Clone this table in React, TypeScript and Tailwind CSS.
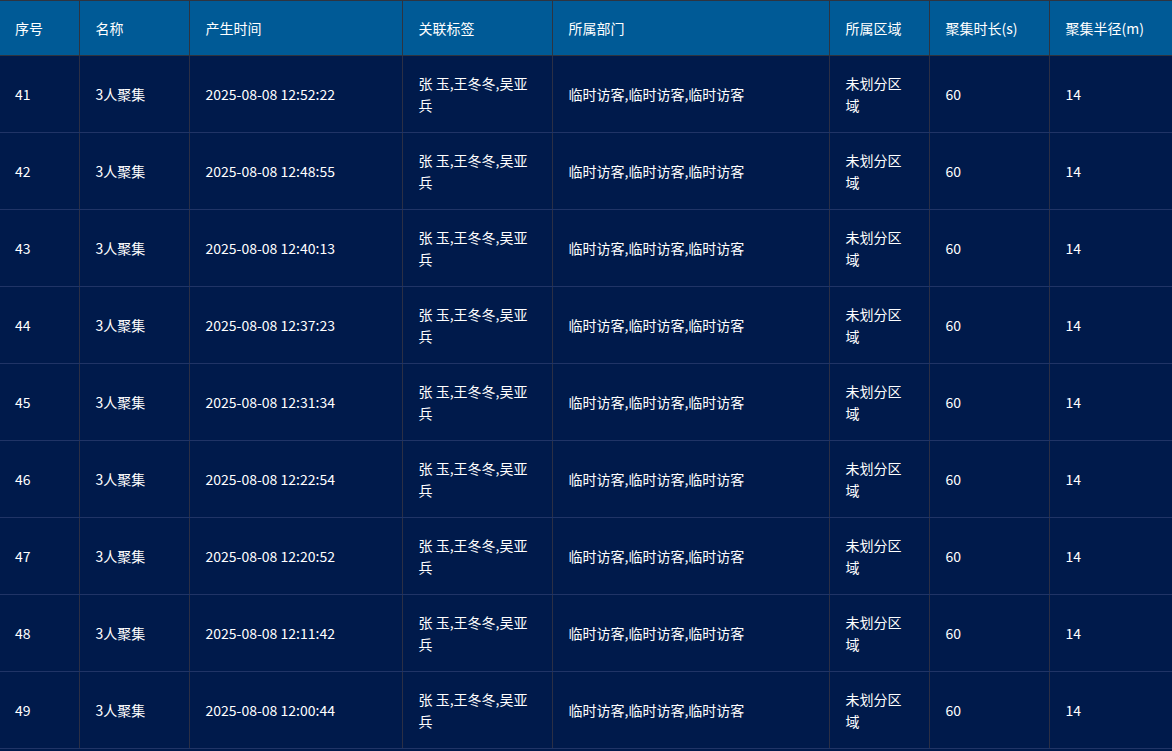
// Gathering events table — static data, presentation only.

type Row = {
  no: number;
  time: string;
};

const rows: Row[] = [
  { no: 41, time: "2025-08-08 12:52:22" },
  { no: 42, time: "2025-08-08 12:48:55" },
  { no: 43, time: "2025-08-08 12:40:13" },
  { no: 44, time: "2025-08-08 12:37:23" },
  { no: 45, time: "2025-08-08 12:31:34" },
  { no: 46, time: "2025-08-08 12:22:54" },
  { no: 47, time: "2025-08-08 12:20:52" },
  { no: 48, time: "2025-08-08 12:11:42" },
  { no: 49, time: "2025-08-08 12:00:44" },
];

const headers = [
  { label: "序号", w: "w-[79px] pl-[15px]" },
  { label: "名称", w: "w-[110px] pl-[16px]" },
  { label: "产生时间", w: "w-[213px] pl-[16px]" },
  { label: "关联标签", w: "w-[150px] pl-[16px]" },
  { label: "所属部门", w: "w-[277px] pl-[16px]" },
  { label: "所属区域", w: "w-[100px] pl-[16px]" },
  { label: "聚集时长(s)", w: "w-[120px] pl-[16px]" },
  { label: "聚集半径(m)", w: "w-[123px] pl-[16px]" },
];

const td =
  "h-[77px] border-r border-b border-r-[#2b2f45] border-b-[#203466] pl-[16px] pr-[17px] align-middle break-all";

export default function App() {
  return (
    <div
      className="h-[751px] w-[1172px] overflow-hidden bg-[#001a4b] text-[14px] leading-[22px] text-white"
      style={{ fontFamily: '"Noto Sans CJK SC", "Liberation Sans", sans-serif' }}
    >
      <table className="w-[1172px] table-fixed border-collapse text-left">
        <thead>
          <tr className="bg-[#005a96]">
            {headers.map((h) => (
              <th
                key={h.label}
                className={`${h.w} h-[55px] border-t border-r border-b border-[#2e3440] pr-[10px] font-normal`}
              >
                {h.label}
              </th>
            ))}
          </tr>
        </thead>
        <tbody>
          {rows.map((r) => (
            <tr key={r.no}>
              <td className={`${td} !pl-[15px]`}>{r.no}</td>
              <td className={td}>3人聚集</td>
              <td className={td}>{r.time}</td>
              <td className={td}>张 玉,王冬冬,吴亚兵</td>
              <td className={td}>临时访客,临时访客,临时访客</td>
              <td className={td}>未划分区域</td>
              <td className={td}>60</td>
              <td className={td}>14</td>
            </tr>
          ))}
        </tbody>
      </table>
    </div>
  );
}
